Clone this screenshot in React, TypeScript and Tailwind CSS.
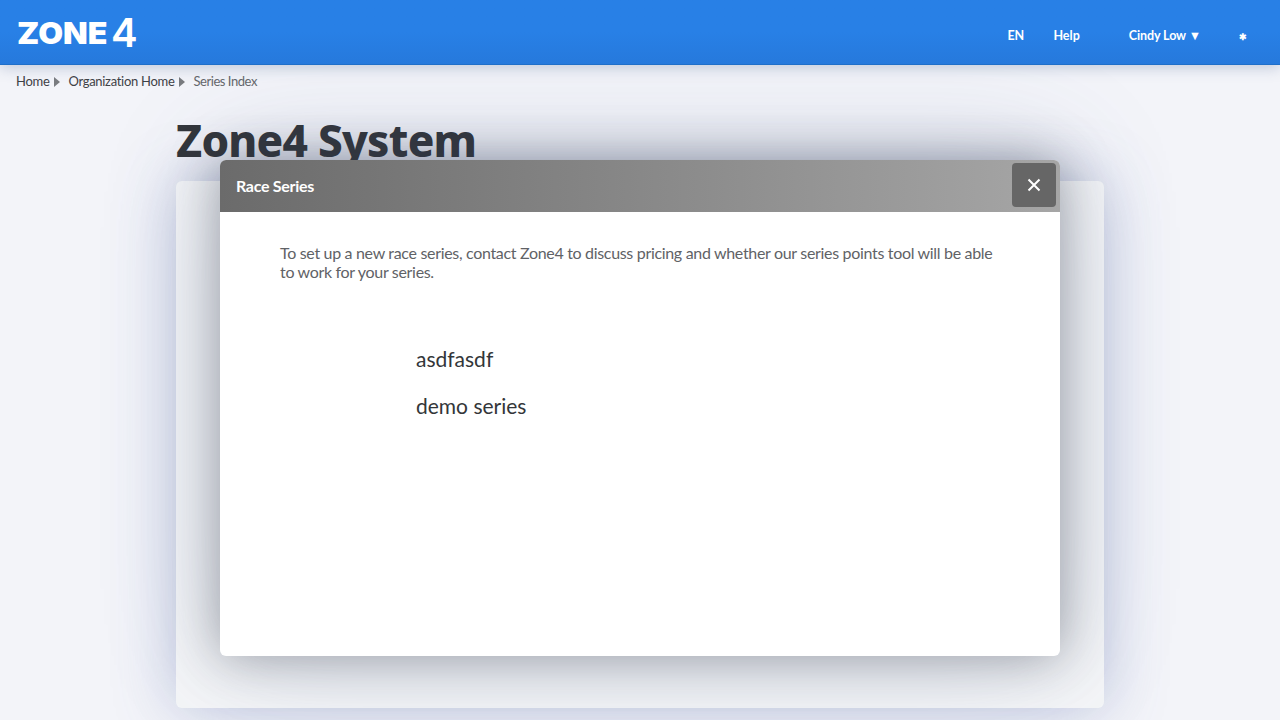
import React from "react";

function Caret() {
  return <span className="inline-block w-0 h-0 border-y-[5px] border-y-transparent border-l-[6px] border-l-[#7a7c80] ml-[5px] mr-[8px]" />;
}

export default function App() {
  return (
    <div className="relative w-[1280px] h-[720px] overflow-hidden bg-[#f3f4f9] font-['Lato',sans-serif]">
      <header className="relative z-10 h-[65px] flex items-center pl-[17px] bg-gradient-to-b from-[#2880e6] via-[#2880e6] to-[#2679dc] border-b border-[#1f6fc9] shadow-[0_2px_14px_rgba(60,90,140,0.3)]">
        <div className="flex items-end h-[46px] -mt-[6px] text-white font-['Inter',sans-serif] leading-none">
          <span className="text-[30px] leading-[30px] font-black w-[94px] mb-[4px] scale-x-[1.07] origin-left">ZONE</span>
          <span className="text-[40px] leading-[38px] font-semibold">4</span>
        </div>
        <nav className="ml-auto flex items-center pt-[9px] text-white text-[12.5px] font-bold">
          <span className="w-[16px] text-center">EN</span>
          <span className="ml-[30px]">Help</span>
          <span className="ml-[49px] tracking-[-0.1px]">Cindy Low ▼</span>
          <span className="ml-[38px] mr-[33px] text-[9px]">✱</span>
        </nav>
      </header>

      <div className="flex items-center h-[33px] pl-[16px] text-[13px] text-[#3f4247] tracking-[-0.3px]">
        <span>Home</span><Caret />
        <span>Organization Home</span><Caret />
        <span className="text-[#66686c] tracking-[-0.45px]">Series Index</span>
      </div>

      <main className="w-[928px] ml-[176px]">
        <h1 className="h-[83px] pt-[12px] text-[44px] leading-[60px] font-extrabold font-['Noto_Sans',sans-serif] text-[#33363b] tracking-[-0.75px]">Zone4 System</h1>
        <div className="h-[527px] rounded-[6px] bg-[#f5f6f8] shadow-[0_0_60px_rgba(95,115,175,0.36)]" />
      </main>

      <div className="absolute left-[220px] top-[160px] w-[840px] h-[496px] rounded-[6px] bg-white overflow-hidden shadow-[0_0_50px_rgba(35,40,50,0.38),0_0_120px_rgba(70,90,140,0.22)]">
        <div className="h-[52px] flex items-center pl-[16px] pr-[4px] pb-[2px] bg-gradient-to-r from-[#6b6b6b] to-[#a6a6a6]">
          <span className="text-[16px] font-bold text-white tracking-[-0.3px] mt-[2px]">Race Series</span>
          <button className="ml-auto w-[44px] h-[44px] rounded-[4px] bg-[#666666] flex items-center justify-center">
            <svg width="14" height="14" viewBox="0 0 14 14" className="stroke-white" strokeWidth="2"><path d="M1.5 1.5 L12.5 12.5 M12.5 1.5 L1.5 12.5" /></svg>
          </button>
        </div>
        <div className="pt-[31px] pl-[60px] pr-[60px]">
          <p className="text-[16px] leading-[19px] text-[#5f6266] tracking-[-0.32px]">To set up a new race series, contact Zone4 to discuss pricing and whether our series points tool will be able to work for your series.</p>
          <ul className="mt-[54px] ml-[136px] text-[#333639] text-[21px] leading-[47px]">
            <li>asdfasdf</li>
            <li>demo series</li>
          </ul>
        </div>
      </div>
    </div>
  );
}
